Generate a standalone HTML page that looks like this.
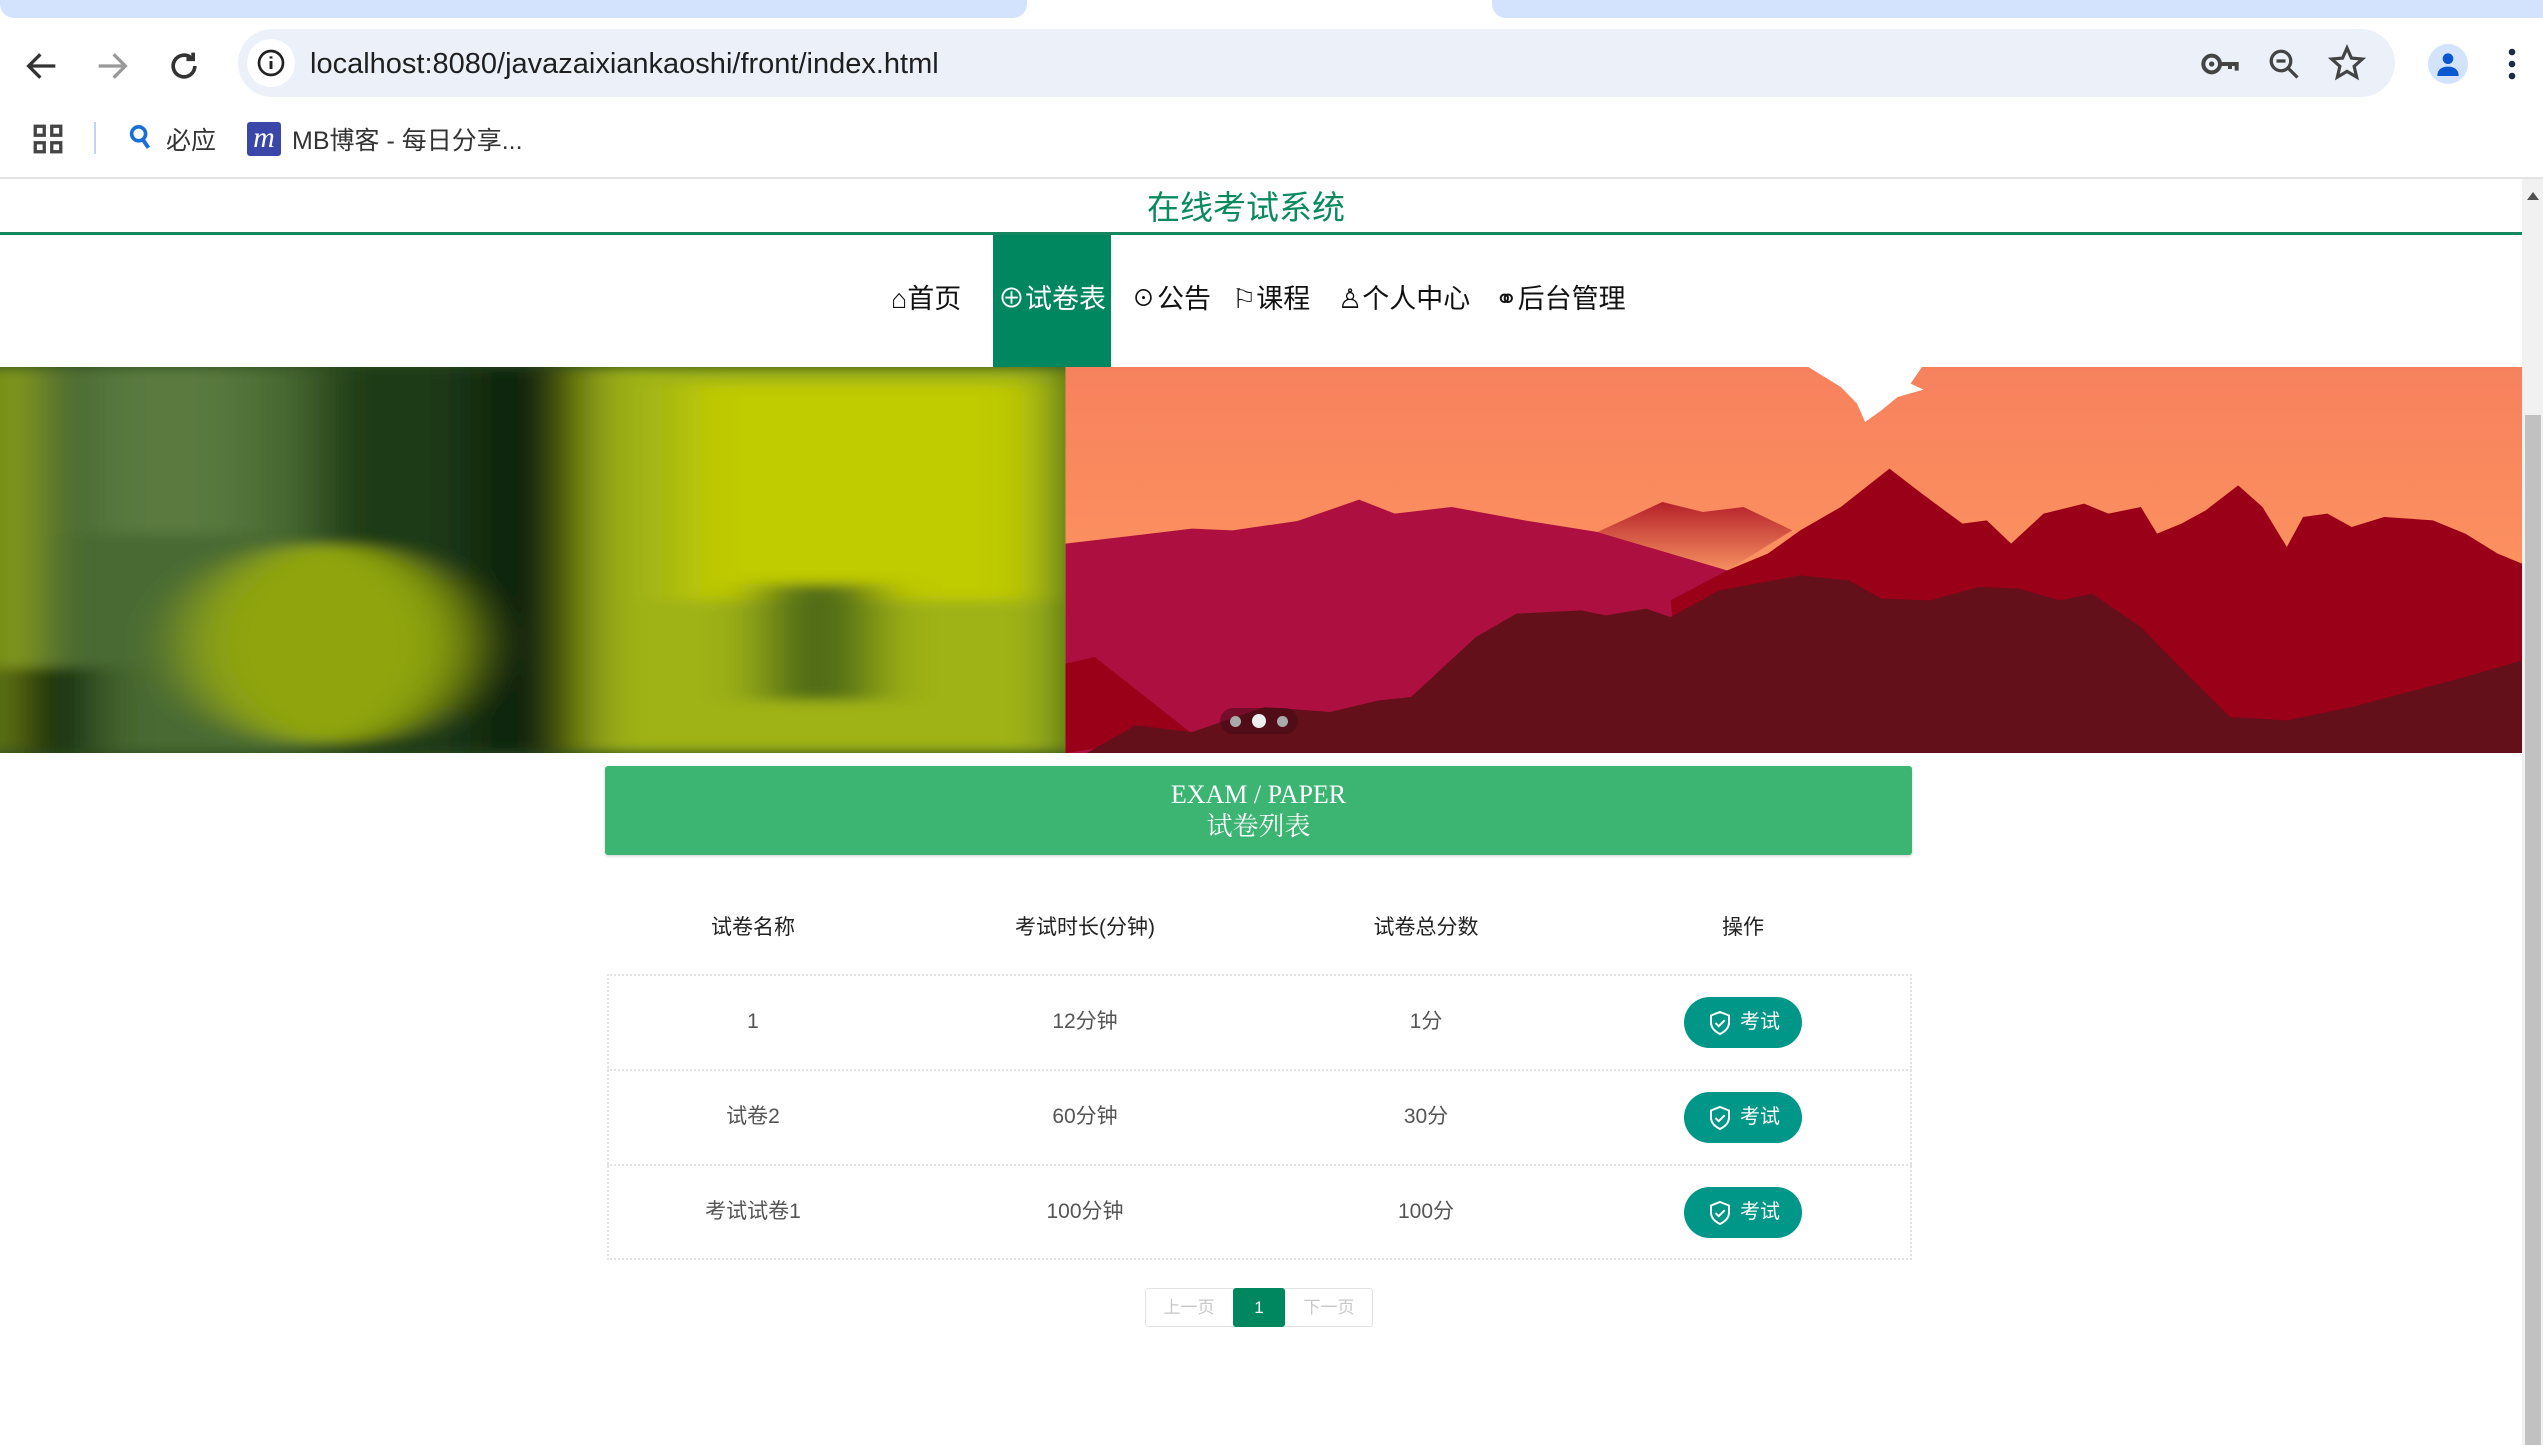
<!DOCTYPE html>
<html><head><meta charset="utf-8">
<style>
*{margin:0;padding:0;box-sizing:border-box}
body{width:2543px;height:1445px;overflow:hidden;background:#fff;font-family:"Liberation Sans","Noto Sans CJK SC",sans-serif;position:relative}
.abs{position:absolute}
.cn{font-family:"Liberation Sans","Noto Sans CJK SC",sans-serif}
</style></head><body>
<!-- tab strip -->
<div class="abs" style="left:0;top:0;width:2543px;height:29px;background:#fff"></div>
<div class="abs" style="left:0;top:-10px;width:1027px;height:28px;background:#d3e3fd;border-radius:0 0 14px 14px"></div>
<div class="abs" style="left:1492px;top:-10px;width:1060px;height:28px;background:#d3e3fd;border-radius:0 0 0 14px"></div>
<!-- toolbar -->
<svg class="abs" style="left:22px;top:46px" width="40" height="40" viewBox="0 0 24 24"><path d="M20 12H5M11 5l-7 7 7 7" fill="none" stroke="#333" stroke-width="2"/></svg>
<svg class="abs" style="left:92px;top:46px" width="40" height="40" viewBox="0 0 24 24"><path d="M4 12h15M13 5l7 7-7 7" fill="none" stroke="#999" stroke-width="2"/></svg>
<svg class="abs" style="left:164px;top:46px" width="40" height="40" viewBox="0 0 24 24"><path d="M18.5 12a6.5 6.5 0 1 1-2-4.7M17.5 4v4h-4" fill="none" stroke="#333" stroke-width="2.2"/></svg>
<div class="abs" style="left:238px;top:29px;width:2157px;height:68px;background:#ebf0f9;border-radius:34px"></div>
<div class="abs" style="left:247px;top:39px;width:48px;height:48px;background:#fff;border-radius:24px"></div>
<svg class="abs" style="left:255px;top:47px" width="32" height="32" viewBox="0 0 24 24"><circle cx="12" cy="12" r="9" fill="none" stroke="#222" stroke-width="2"/><path d="M12 10.5v6M12 7v1.6" stroke="#222" stroke-width="2.2"/></svg>
<div class="abs" style="left:310px;top:45px;font-size:29px;color:#1f1f1f;line-height:38px">localhost:8080/javazaixiankaoshi/front/index.html</div>
<svg class="abs" style="left:2200px;top:47px" width="40" height="34" viewBox="0 0 24 20"><circle cx="7" cy="10" r="5" fill="none" stroke="#444" stroke-width="2.4"/><circle cx="7" cy="10" r="1.6" fill="#444"/><path d="M12 10h10v4M18 10v3" fill="none" stroke="#444" stroke-width="2.4"/></svg>
<svg class="abs" style="left:2266px;top:46px" width="36" height="36" viewBox="0 0 24 24"><circle cx="10" cy="10" r="6.5" fill="none" stroke="#444" stroke-width="2.2"/><path d="M7 10h6M15 15l6 6" stroke="#444" stroke-width="2.2"/></svg>
<svg class="abs" style="left:2328px;top:44px" width="38" height="38" viewBox="0 0 24 24"><path d="M12 2.5l2.8 6.4 6.9.6-5.2 4.6 1.6 6.8L12 17.3l-6.1 3.6 1.6-6.8-5.2-4.6 6.9-.6z" fill="none" stroke="#444" stroke-width="2"/></svg>
<div class="abs" style="left:2428px;top:44px;width:40px;height:40px;border-radius:20px;background:#d3e3fd"></div>
<svg class="abs" style="left:2432px;top:48px" width="32" height="32" viewBox="0 0 24 24"><circle cx="12" cy="8" r="4" fill="#0b57d0"/><path d="M4 21c0-5 3.5-7 8-7s8 2 8 7z" fill="#0b57d0"/></svg>
<svg class="abs" style="left:2500px;top:46px" width="24" height="36" viewBox="0 0 8 24"><circle cx="4" cy="4" r="2.2" fill="#1f2b44"/><circle cx="4" cy="12" r="2.2" fill="#1f2b44"/><circle cx="4" cy="20" r="2.2" fill="#1f2b44"/></svg>
<!-- bookmarks -->
<svg class="abs" style="left:33px;top:124px" width="30" height="30" viewBox="0 0 20 20"><g fill="none" stroke="#444" stroke-width="2.2"><rect x="1.5" y="1.5" width="6" height="6"/><rect x="12.5" y="1.5" width="6" height="6"/><rect x="1.5" y="12.5" width="6" height="6"/><rect x="12.5" y="12.5" width="6" height="6"/></g></svg>
<div class="abs" style="left:94px;top:122px;width:2px;height:32px;background:#c5d4ee"></div>
<svg class="abs" style="left:128px;top:124px" width="24" height="28" viewBox="0 0 16 20"><circle cx="7" cy="7" r="5" fill="none" stroke="#1a6fd6" stroke-width="2.6"/><path d="M10 11l4 6" stroke="#1a6fd6" stroke-width="2.8"/></svg>
<div class="abs cn" style="left:166px;top:121px;font-size:25px;color:#333">必应</div>
<div class="abs" style="left:247px;top:122px;width:34px;height:34px;background:#3b47a8;border-radius:3px;color:#fff;font:italic 30px 'Liberation Serif',serif;text-align:center;line-height:32px">m</div>
<div class="abs cn" style="left:292px;top:121px;font-size:25px;color:#333">MB博客 - 每日分享...</div>
<div class="abs" style="left:0;top:177px;width:2543px;height:2px;background:#e3e3e3"></div>
<!-- scrollbar -->
<div class="abs" style="left:2522px;top:179px;width:21px;height:1266px;background:#f1f1f1"></div>
<div class="abs" style="left:2525px;top:415px;width:16px;height:1030px;background:#c1c1c1"></div>
<svg class="abs" style="left:2525px;top:190px" width="16" height="12" viewBox="0 0 16 12"><path d="M2 10L8 2l6 8z" fill="#505050"/></svg>
<!-- title -->
<div class="abs cn" style="left:1046px;width:400px;top:186px;text-align:center;font-size:33px;color:#0b8a5e;line-height:44px">在线考试系统</div>
<div class="abs" style="left:0;top:232px;width:2522px;height:3px;background:#15875f"></div>
<!-- nav -->
<div class="abs" style="left:993px;top:235px;width:118px;height:132px;background:#00875f"></div>
<div class="abs cn" style="left:0;top:279px;width:2522px;font-size:27px;line-height:40px;color:#111;white-space:nowrap">
<span class="abs" style="left:891px">⌂首页</span>
<span class="abs" style="left:998px;color:#fff">⊕试卷表</span>
<span class="abs" style="left:1130px">☉公告</span>
<span class="abs" style="left:1232px">⚐课程</span>
<span class="abs" style="left:1338px">♙个人中心</span>
<span class="abs" style="left:1495px">⚭后台管理</span>
</div>
<!-- banner -->
<svg class="abs" style="left:0;top:367px" width="2522" height="386" viewBox="0 0 1555 1158" preserveAspectRatio="none">
<defs>
<filter id="b" x="-20%" y="-20%" width="140%" height="140%"><feGaussianBlur stdDeviation="18"/></filter>
<linearGradient id="sky" x1="0" y1="0" x2="0" y2="1"><stop offset="0" stop-color="#f7815e"/><stop offset=".5" stop-color="#fc905f"/><stop offset="1" stop-color="#fb9a5e"/></linearGradient>
<linearGradient id="far" x1="0" y1="0" x2="0" y2="1"><stop offset="0" stop-color="#b5202a"/><stop offset="1" stop-color="#f59060"/></linearGradient>
</defs>
<rect x="0" y="0" width="657" height="1158" fill="#2c4a1e"/>
<g filter="url(#b)">
<rect x="-10" y="0" width="25" height="1158" fill="#b6c810"/>
<rect x="25" y="0" width="170" height="1158" fill="#4a6a32"/>
<rect x="60" y="0" width="90" height="500" fill="#5a7a40"/>
<rect x="195" y="0" width="140" height="1158" fill="#1f3a18"/>
<rect x="290" y="0" width="70" height="1158" fill="#10240c"/>
<rect x="360" y="0" width="300" height="1158" fill="#9fb212"/>
<rect x="420" y="50" width="220" height="650" fill="#c0cb05"/>
<rect x="470" y="650" width="70" height="350" fill="#4e6a14"/>
<ellipse cx="200" cy="830" rx="85" ry="300" fill="#8fa410"/>
<rect x="0" y="900" width="60" height="258" fill="#0f2a0c"/>
</g>
<rect x="657" y="0" width="898" height="1158" fill="url(#sky)"/>
<path d="M1115 0L1185 0 1178 50 1186 68 1170 90 1160 130 1150 165 1145 110 1135 60z" fill="#fff"/>
<path d="M657 530L735 485 760 490 800 462 838 398 860 440 895 420 940 460 985 495 1065 610 1065 1158 657 1158z" fill="#ad1040"/>
<path d="M985 495L1025 405 1050 435 1075 420 1105 490 1065 610z" fill="url(#far)"/>
<path d="M1065 610L1090 560 1110 490 1135 420 1165 305 1185 380 1210 470 1225 460 1240 530 1260 440 1285 410 1300 440 1320 420 1330 500 1345 470 1360 430 1380 355 1395 420 1410 540 1420 450 1435 440 1450 480 1470 450 1500 460 1520 500 1540 560 1555 590 1555 1158 1040 1158 1030 700z" fill="#9a0018"/>
<path d="M657 890L675 870 735 1100 657 1158z" fill="#9a0018"/>
<path d="M670 1158L700 1075 735 1095 780 1020 820 1035 850 1000 870 990 890 900 910 810 935 740 975 730 990 745 1015 725 1030 750 1060 670 1110 625 1140 640 1160 695 1190 700 1220 660 1245 665 1270 700 1290 680 1320 780 1340 880 1375 1050 1410 1060 1450 1020 1520 930 1555 880 1555 1158z" fill="#64101a"/>
</svg>
<div class="abs" style="left:1220px;top:708px;width:78px;height:26px;border-radius:13px;background:rgba(60,10,20,.5)"></div>
<div class="abs" style="left:1230px;top:716px;width:11px;height:11px;border-radius:6px;background:#aaa"></div>
<div class="abs" style="left:1252px;top:714px;width:14px;height:14px;border-radius:7px;background:#eee"></div>
<div class="abs" style="left:1277px;top:716px;width:11px;height:11px;border-radius:6px;background:#aaa"></div>
<!-- exam header -->
<div class="abs" style="left:605px;top:766px;width:1307px;height:89px;background:#3db572;border-radius:3px;box-shadow:0 1px 3px rgba(0,0,0,.2);color:#fff;text-align:center;font-family:'Liberation Serif','Noto Serif CJK SC',serif;font-size:26px;line-height:32px;padding-top:13px">EXAM / PAPER<br>试卷列表</div>
<!-- table -->
<div class="abs cn" style="left:0;top:913px;width:2522px;font-size:21px;color:#222;line-height:30px">
<span class="abs" style="left:653px;width:200px;text-align:center">试卷名称</span>
<span class="abs" style="left:935px;width:300px;text-align:center">考试时长(分钟)</span>
<span class="abs" style="left:1326px;width:200px;text-align:center">试卷总分数</span>
<span class="abs" style="left:1643px;width:200px;text-align:center">操作</span>
</div>
<div class="abs" style="left:607px;top:974px;width:1305px;height:286px;border:2px dotted #e2e2e2"></div>
<div class="abs" style="left:607px;top:1069px;width:1305px;height:0;border-top:2px dotted #e2e2e2"></div>
<div class="abs" style="left:607px;top:1164px;width:1305px;height:0;border-top:2px dotted #e2e2e2"></div>
<div class="abs cn" style="left:0;top:1007px;width:2522px;font-size:21px;color:#555;line-height:30px">
<span class="abs" style="left:653px;width:200px;text-align:center">1</span>
<span class="abs" style="left:985px;width:200px;text-align:center">12分钟</span>
<span class="abs" style="left:1326px;width:200px;text-align:center">1分</span>
<span class="abs" style="left:653px;top:95px;width:200px;text-align:center">试卷2</span>
<span class="abs" style="left:985px;top:95px;width:200px;text-align:center">60分钟</span>
<span class="abs" style="left:1326px;top:95px;width:200px;text-align:center">30分</span>
<span class="abs" style="left:653px;top:190px;width:200px;text-align:center">考试试卷1</span>
<span class="abs" style="left:985px;top:190px;width:200px;text-align:center">100分钟</span>
<span class="abs" style="left:1326px;top:190px;width:200px;text-align:center">100分</span>
</div>
<div class="abs" style="left:1684px;top:997px;width:118px;height:51px;border-radius:26px;background:#009688"></div>
<div class="abs" style="left:1684px;top:1092px;width:118px;height:51px;border-radius:26px;background:#009688"></div>
<div class="abs" style="left:1684px;top:1187px;width:118px;height:51px;border-radius:26px;background:#009688"></div>
<div class="abs cn" style="left:1708px;top:1007px;color:#fff;font-size:20px;line-height:30px">
<svg class="abs" style="left:0;top:3px" width="24" height="26" viewBox="0 0 24 26"><path d="M12 2l9 3.5v7c0 5.5-4 9-9 11.5C7 21.5 3 18 3 12.5v-7z" fill="none" stroke="#fff" stroke-width="2"/><path d="M7.5 13l3.2 3.2 6-6" fill="none" stroke="#fff" stroke-width="2"/></svg><span class="abs" style="left:32px;white-space:nowrap">考试</span>
<svg class="abs" style="left:0;top:98px" width="24" height="26" viewBox="0 0 24 26"><path d="M12 2l9 3.5v7c0 5.5-4 9-9 11.5C7 21.5 3 18 3 12.5v-7z" fill="none" stroke="#fff" stroke-width="2"/><path d="M7.5 13l3.2 3.2 6-6" fill="none" stroke="#fff" stroke-width="2"/></svg><span class="abs" style="left:32px;top:95px;white-space:nowrap">考试</span>
<svg class="abs" style="left:0;top:193px" width="24" height="26" viewBox="0 0 24 26"><path d="M12 2l9 3.5v7c0 5.5-4 9-9 11.5C7 21.5 3 18 3 12.5v-7z" fill="none" stroke="#fff" stroke-width="2"/><path d="M7.5 13l3.2 3.2 6-6" fill="none" stroke="#fff" stroke-width="2"/></svg><span class="abs" style="left:32px;top:190px;white-space:nowrap">考试</span>
</div>
<!-- pagination -->
<div class="abs" style="left:1145px;top:1288px;width:228px;height:39px;border:1px solid #e2e2e2;border-radius:3px"></div>
<div class="abs" style="left:1233px;top:1288px;width:52px;height:39px;background:#00875f;border-radius:3px;color:#fff;font-size:17px;text-align:center;line-height:39px">1</div>
<div class="abs cn" style="left:1145px;top:1288px;width:88px;text-align:center;line-height:39px;font-size:17px;color:#c8c8c8">上一页</div>
<div class="abs cn" style="left:1285px;top:1288px;width:88px;text-align:center;line-height:39px;font-size:17px;color:#c8c8c8">下一页</div>
</body></html>
